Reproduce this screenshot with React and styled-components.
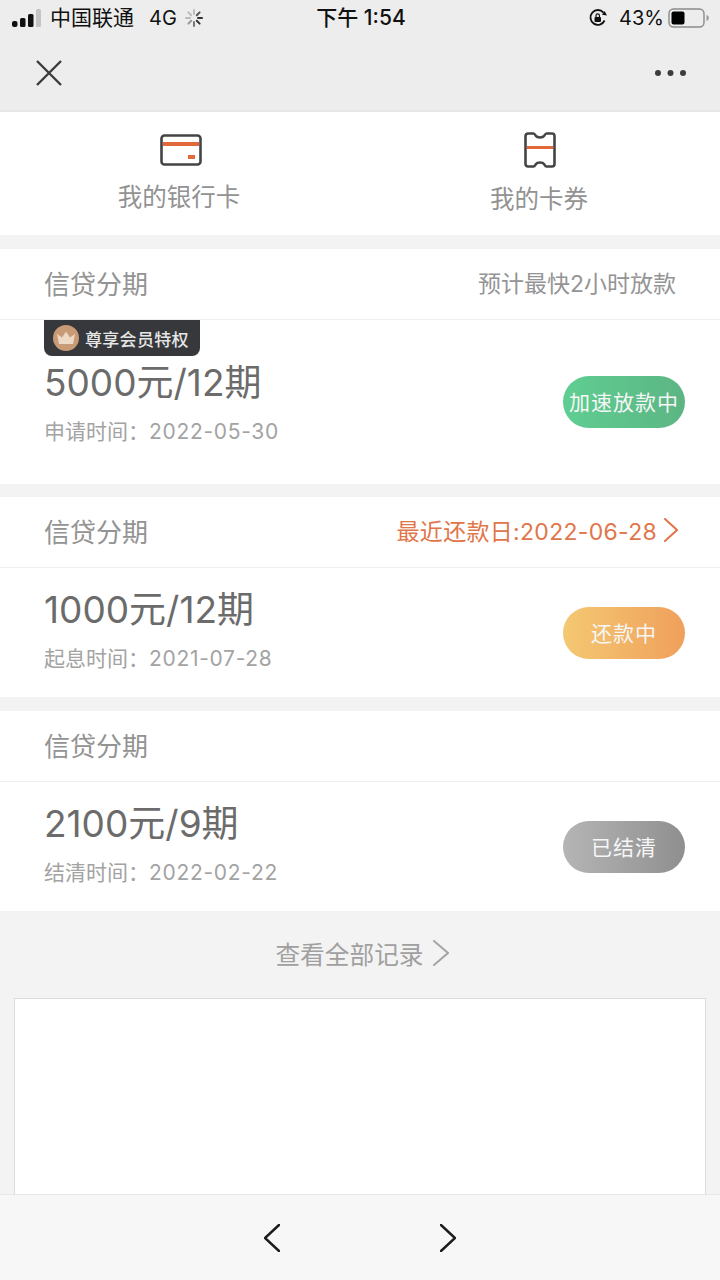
import styled, { createGlobalStyle } from "styled-components";

const GlobalStyle = createGlobalStyle`
  html, body {
    margin: 0;
    padding: 0;
    background: #f3f3f3;
  }
  * {
    box-sizing: border-box;
  }
`;

const Page = styled.div`
  width: 720px;
  height: 1280px;
  display: flex;
  flex-direction: column;
  overflow: hidden;
  background: #f3f3f3;
  font-family: "Inter", "Noto Sans CJK SC", sans-serif;
`;

const TopBar = styled.header`
  height: 112px;
  flex: none;
  background: #ededed;
  border-bottom: 2px solid #e6e6e6;
`;

const StatusBar = styled.div`
  height: 36px;
  padding: 0 10px 0 12px;
  display: grid;
  grid-template-columns: 1fr auto 1fr;
  align-items: center;
  color: #111;
`;

const StatusLeft = styled.div`
  display: flex;
  align-items: center;
`;

const StatusRight = styled.div`
  display: flex;
  align-items: center;
  justify-content: flex-end;
`;

const Carrier = styled.span`
  font-size: 21px;
  line-height: 36px;
  margin-left: 8px;
`;

const Network = styled.span`
  font-size: 20px;
  margin: 0 8px 0 15px;
`;

const Clock = styled.span`
  font-size: 21px;
  font-weight: 500;
  line-height: 36px;
`;

const Percent = styled.span`
  font-size: 20px;
  margin: 0 4px 0 11px;
`;

const NavBar = styled.nav`
  height: 74px;
  padding: 0 33px 0 35px;
  display: flex;
  align-items: center;
  justify-content: space-between;
`;

const Shortcuts = styled.section`
  height: 123px;
  flex: none;
  display: grid;
  grid-template-columns: 358px 1fr;
  background: #fff;
`;

const Shortcut = styled.div`
  display: flex;
  flex-direction: column;
  align-items: center;
  padding-top: ${(p) => p.$top}px;
  gap: 14px;
  font-size: 24.5px;
  line-height: 34px;
  color: #929292;
`;

const IconSlot = styled.div`
  display: flex;
  margin-left: ${(p) => p.$ml}px;
`;

const Card = styled.section`
  flex: none;
  margin-top: ${(p) => p.$mt || 14}px;
  background: #fff;
`;

const CardHeader = styled.div`
  height: 71px;
  padding: 0 44px 4px;
  display: flex;
  align-items: center;
  justify-content: space-between;
  border-bottom: 1px solid #efefef;
`;

const CardTitle = styled.span`
  font-size: 26px;
  color: #939393;
`;

const HeaderNote = styled.span`
  font-size: 23px;
  color: #949494;
`;

const DueDate = styled.span`
  margin-right: -2px;
  display: flex;
  align-items: center;
  gap: 7px;
  font-size: 23px;
  letter-spacing: 0.3px;
  color: #e0764a;
`;

const CardBody = styled.div`
  position: relative;
  height: ${(p) => p.$height}px;
  padding: ${(p) => p.$pad}px 35px 0 44px;
  display: flex;
  justify-content: space-between;
`;

const Badge = styled.div`
  position: absolute;
  top: 0;
  left: 44px;
  width: 156px;
  height: 36px;
  padding-left: 9px;
  display: flex;
  align-items: center;
  gap: 6px;
  border-radius: 0 0 8px 8px;
  background: #36383b;
  color: #e6e6e6;
  font-size: 17px;
  font-weight: 500;
  letter-spacing: 0.3px;
  white-space: nowrap;
`;

const Info = styled.div`
  display: flex;
  flex-direction: column;
`;

const Amount = styled.div`
  font-size: 37px;
  line-height: 44px;
  color: #6b6b6b;
`;

const DateLine = styled.div`
  margin-top: 12px;
  font-size: 21px;
  line-height: 30px;
  color: #a3a3a3;
`;

const DateValue = styled.span`
  letter-spacing: 0.7px;
`;

const StatusPill = styled.div`
  width: 122px;
  height: 52px;
  margin-top: ${(p) => p.$mt}px;
  padding-bottom: 3px;
  display: flex;
  align-items: center;
  justify-content: center;
  border-radius: 26px;
  background: linear-gradient(90deg, ${(p) => p.$from}, ${(p) => p.$to});
  color: #f6f6f6;
  font-size: 21px;
  letter-spacing: 1px;
  white-space: nowrap;
`;

const AllRecords = styled.div`
  height: 87px;
  flex: none;
  padding: 0 0 4px 4px;
  display: flex;
  align-items: center;
  justify-content: center;
  gap: 9px;
  font-size: 24.7px;
  color: #a0a0a0;
`;

const Frame = styled.div`
  flex: 1;
  margin: 0 14px;
  background: #fff;
  border: 1px solid #dcdcdc;
  border-bottom: none;
`;

const BottomBar = styled.footer`
  height: 86px;
  flex: none;
  display: flex;
  align-items: center;
  justify-content: center;
  gap: 160px;
  background: #f7f7f7;
  border-top: 1px solid #e8e8e8;
`;

const SignalIcon = () => (
  <svg width="30" height="20" viewBox="0 0 30 20">
    <rect x="0" y="13" width="5.5" height="6" rx="2" fill="#111" />
    <rect x="8" y="10" width="5.5" height="9" rx="1.5" fill="#111" />
    <rect x="16" y="6" width="5.5" height="13" rx="1.5" fill="#111" />
    <rect x="24" y="1" width="5" height="18" rx="1.5" fill="#c4c4c4" />
  </svg>
);

const SpinnerIcon = () => (
  <svg width="18" height="18" viewBox="0 0 18 18" strokeWidth="2" strokeLinecap="round">
    <path d="M9 1v4" stroke="#bdbdbd" />
    <path d="M14.6 3.4l-2.8 2.8" stroke="#555" />
    <path d="M17 9h-4" stroke="#333" />
    <path d="M14.6 14.6l-2.8-2.8" stroke="#333" />
    <path d="M9 17v-4" stroke="#777" />
    <path d="M3.4 14.6l2.8-2.8" stroke="#999" />
    <path d="M1 9h4" stroke="#bbb" />
    <path d="M3.4 3.4l2.8 2.8" stroke="#bdbdbd" />
  </svg>
);

const RotationLockIcon = () => (
  <svg width="20" height="20" viewBox="0 0 20 20" fill="none">
    <path d="M16.6 12.5A7.4 7.4 0 1 1 15.5 4.6" stroke="#111" strokeWidth="1.8" />
    <path d="M14 6.8l5 .6-2.4-4.4z" fill="#111" />
    <rect x="6.5" y="9" width="6.5" height="5" rx="1" fill="#111" />
    <path d="M8 9V7.6a1.7 1.7 0 0 1 3.4 0V9" stroke="#111" strokeWidth="1.2" />
  </svg>
);

const BatteryIcon = () => (
  <svg width="42" height="20" viewBox="0 0 42 20">
    <rect x="1" y="1" width="35" height="18" rx="4.5" fill="none" stroke="#8a8a8a" strokeWidth="1.4" />
    <rect x="3.5" y="3.5" width="13" height="13" rx="2" fill="#000" />
    <path d="M38.5 7c1.6.4 2.3 1.6 2.3 3s-.7 2.6-2.3 3z" fill="#9a9a9a" />
  </svg>
);

const CloseIcon = () => (
  <svg width="28" height="28" viewBox="0 0 28 28" stroke="#3c3c3c" strokeWidth="2.4">
    <path d="M2 2l24 24M26 2L2 26" />
  </svg>
);

const MoreIcon = () => (
  <svg width="32" height="8" viewBox="0 0 32 8" fill="#3c3c3c">
    <circle cx="3" cy="4" r="3" />
    <circle cx="15.5" cy="4" r="3" />
    <circle cx="28" cy="4" r="3" />
  </svg>
);

const BankCardIcon = () => (
  <svg width="42" height="32" viewBox="0 0 42 32" fill="none">
    <rect x="1.5" y="1.5" width="39" height="29" rx="3" stroke="#444" strokeWidth="2.6" />
    <rect x="3" y="8" width="36" height="4" fill="#e4693a" />
    <rect x="28" y="21" width="7" height="4" fill="#e4693a" />
  </svg>
);

const TicketIcon = () => (
  <svg width="32" height="36" viewBox="0 0 32 36" fill="none">
    <path
      d="M4 1.5h5.5c1 0 1.500 1 2.300 2.300.8 1.200 2.400 1.700 4.200 1.700s3.400-.5 4.200-1.700c.8-1.300 1.300-2.300 2.300-2.300H28a2.500 2.500 0 0 1 2.500 2.500v28a2.500 2.500 0 0 1-2.500 2.500h-5.500c-1 0-1.500-1-2.300-2.300-.8-1.200-2.400-1.700-4.200-1.700s-3.400.5-4.200 1.700c-.8 1.300-1.300 2.300-2.300 2.300H4A2.500 2.500 0 0 1 1.500 32V4A2.500 2.500 0 0 1 4 1.500z"
      stroke="#444"
      strokeWidth="2.6"
    />
    <rect x="3" y="14" width="26" height="3" fill="#e4693a" />
  </svg>
);

const CrownIcon = () => (
  <svg width="26" height="26" viewBox="0 0 26 26">
    <circle cx="13" cy="13" r="13" fill="#c99a76" />
    <path d="M6 19l-2-10 5 3.5 4-6 4 6 5-3.5-2 10z" fill="#eed9c6" />
  </svg>
);

const Chevron = ({ dir = "right", w = 14, h = 24, color = "#e0764a", sw = 2 }) => (
  <svg width={w} height={h} viewBox={`0 0 ${w} ${h}`} fill="none" stroke={color} strokeWidth={sw} strokeLinecap="round">
    {dir === "right" ? (
      <path d={`M1 1L${w - 1} ${h / 2}L1 ${h - 1}`} />
    ) : (
      <path d={`M${w - 1} 1L1 ${h / 2}L${w - 1} ${h - 1}`} />
    )}
  </svg>
);

function App() {
  return (
    <Page>
      <GlobalStyle />
      <TopBar>
        <StatusBar>
          <StatusLeft>
            <SignalIcon />
            <Carrier>中国联通</Carrier>
            <Network>4G</Network>
            <SpinnerIcon />
          </StatusLeft>
          <Clock>下午 1:54</Clock>
          <StatusRight>
            <RotationLockIcon />
            <Percent>43%</Percent>
            <BatteryIcon />
          </StatusRight>
        </StatusBar>
        <NavBar>
          <CloseIcon />
          <MoreIcon />
        </NavBar>
      </TopBar>

      <Shortcuts>
        <Shortcut $top={22}>
          <IconSlot $ml={3}>
            <BankCardIcon />
          </IconSlot>
          我的银行卡
        </Shortcut>
        <Shortcut $top={20}>
          <IconSlot $ml={2}>
            <TicketIcon />
          </IconSlot>
          我的卡券
        </Shortcut>
      </Shortcuts>

      <Card>
        <CardHeader>
          <CardTitle>信贷分期</CardTitle>
          <HeaderNote>预计最快2小时放款</HeaderNote>
        </CardHeader>
        <CardBody $height={164} $pad={41}>
          <Badge>
            <CrownIcon />
            尊享会员特权
          </Badge>
          <Info>
            <Amount>5000元/12期</Amount>
            <DateLine>
              申请时间：<DateValue>2022-05-30</DateValue>
            </DateLine>
          </Info>
          <StatusPill $mt={15} $from="#5fce92" $to="#5cb583">
            加速放款中
          </StatusPill>
        </CardBody>
      </Card>

      <Card $mt={13}>
        <CardHeader>
          <CardTitle>信贷分期</CardTitle>
          <DueDate>
            最近还款日:2022-06-28
            <Chevron />
          </DueDate>
        </CardHeader>
        <CardBody $height={129} $pad={20}>
          <Info>
            <Amount>1000元/12期</Amount>
            <DateLine>
              起息时间：<DateValue>2021-07-28</DateValue>
            </DateLine>
          </Info>
          <StatusPill $mt={19} $from="#f4c872" $to="#f0a05c">
            还款中
          </StatusPill>
        </CardBody>
      </Card>

      <Card>
        <CardHeader>
          <CardTitle>信贷分期</CardTitle>
        </CardHeader>
        <CardBody $height={129} $pad={20}>
          <Info>
            <Amount>2100元/9期</Amount>
            <DateLine>
              结清时间：<DateValue>2022-02-22</DateValue>
            </DateLine>
          </Info>
          <StatusPill $mt={19} $from="#b5b5b5" $to="#8f8f8f">
            已结清
          </StatusPill>
        </CardBody>
      </Card>

      <AllRecords>
        查看全部记录
        <Chevron w={16} h={26} color="#a5a5a5" />
      </AllRecords>
      <Frame />

      <BottomBar>
        <Chevron dir="left" w={16} h={28} color="#1c1c1c" sw={2.4} />
        <Chevron w={16} h={28} color="#1c1c1c" sw={2.4} />
      </BottomBar>
    </Page>
  );
}

export default App;
